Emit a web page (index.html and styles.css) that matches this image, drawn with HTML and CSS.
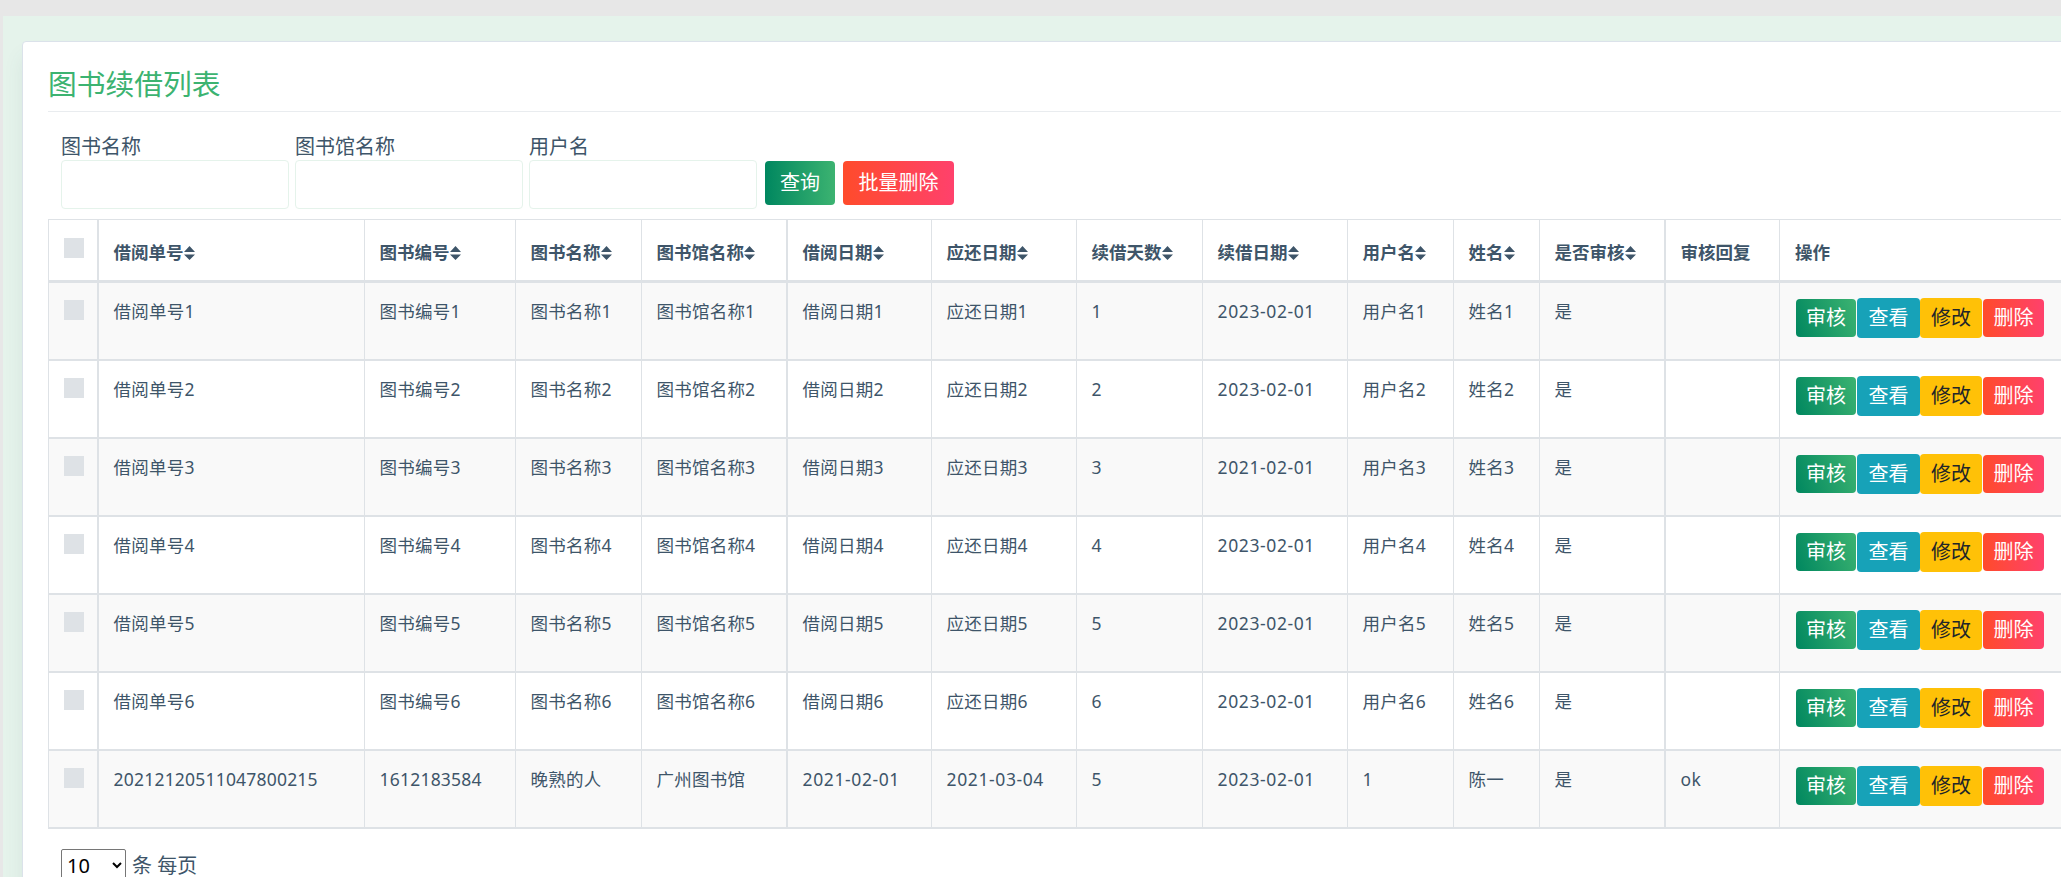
FILE: index.html
```html
<!DOCTYPE html>
<html lang="zh-CN">
<head>
    <meta charset="UTF-8">
    <meta name="viewport" content="width=device-width, initial-scale=1.0">
    <title>图书续借列表</title>
    <link rel="stylesheet" href="styles.css">
</head>
<body>
    <div class="content">
        <div class="widget-area">
            <h3 class="widget-title">图书续借列表</h3>
            <div class="search">
                <div class="field">
                    <label for="tushumingcheng">图书名称</label>
                    <input type="text" id="tushumingcheng" class="form-control">
                </div>
                <div class="field">
                    <label for="tushuguan">图书馆名称</label>
                    <input type="text" id="tushuguan" class="form-control">
                </div>
                <div class="field">
                    <label for="yonghuming">用户名</label>
                    <input type="text" id="yonghuming" class="form-control">
                </div>
                <div class="search-btns">
                    <button type="button" class="btn btn-success">查询</button>
                    <button type="button" class="btn btn-danger">批量删除</button>
                </div>
            </div>
            <table class="table">
                <colgroup>
                    <col class="w-check"><col class="w-order"><col class="w-code"><col class="w-name">
                    <col class="w-library"><col class="w-start"><col class="w-due"><col class="w-days">
                    <col class="w-renew"><col class="w-user"><col class="w-real"><col class="w-audit">
                    <col class="w-reply"><col class="w-action">
                </colgroup>
                <thead>
                    <tr id="thead"></tr>
                </thead>
                <tbody id="tbody"></tbody>
            </table>
            <div class="pager">
                <select class="page-size">
                    <option>10</option>
                    <option>25</option>
                    <option>50</option>
                </select>
                <span>条 每页</span>
            </div>
        </div>
    </div>

    <script>
        const sortIcon = '<svg class="sort" viewBox="0 0 11 14"><path d="M5.5 0L11 6H0zM0 8.5h11L5.5 14z"/></svg>';
        const columns = ['借阅单号', '图书编号', '图书名称', '图书馆名称', '借阅日期', '应还日期', '续借天数', '续借日期', '用户名', '姓名', '是否审核'];
        const rows = [];

        for (let i = 1; i <= 6; i++) {
            const date = i === 3 ? '2021-02-01' : '2023-02-01';
            rows.push(['借阅单号' + i, '图书编号' + i, '图书名称' + i, '图书馆名称' + i, '借阅日期' + i, '应还日期' + i, i, date, '用户名' + i, '姓名' + i, '是', '']);
        }
        rows.push(['20212120511047800215', '1612183584', '晚熟的人', '广州图书馆', '2021-02-01', '2021-03-04', '5', '2023-02-01', '1', '陈一', '是', 'ok']);

        function cell(value) {
            const isDate = /^\d{4}-/.test(value);
            return isDate ? `<td class="date">${value}</td>` : `<td>${value}</td>`;
        }

        // 表头
        document.getElementById('thead').innerHTML =
            '<th><span class="check"></span></th>' +
            columns.map(name => `<th>${name}${sortIcon}</th>`).join('') +
            '<th>审核回复</th><th>操作</th>';

        // 数据行
        document.getElementById('tbody').innerHTML = rows.map(row => `
            <tr>
                <td><span class="check"></span></td>
                ${row.map(cell).join('')}
                <td>
                    <div class="actions">
                        <button class="btn-sm btn-success">审核</button>
                        <button class="btn-sm btn-info">查看</button>
                        <button class="btn-sm btn-warning">修改</button>
                        <button class="btn-sm btn-danger">删除</button>
                    </div>
                </td>
            </tr>`).join('');
    </script>
</body>
</html>
```
FILE: styles.css
```css
* {
    box-sizing: border-box;
}
body {
    margin: 0;
    padding: 16px 0 0 3px;
    height: 877px;
    overflow: hidden;
    background-color: #e7e7e7;
    color: #3e5569;
    font-family: "Noto Sans", "Noto Sans CJK SC", sans-serif;
    font-size: 20px;
    font-weight: 400;
}
.content {
    width: 2110px;
    height: 900px;
    padding: 25px 19px;
    background-color: #e5f3eb;
}
.widget-area {
    height: 1000px;
    padding: 24px 25px;
    background-color: #fff;
    border: 1px solid #dbe2ea;
    border-radius: 4px;
    box-shadow: 0 15px 20px rgba(62, 85, 105, 0.08);
}
.widget-title {
    height: 46px;
    margin: 0 0 20px;
    line-height: 36px;
    font-size: 28.75px;
    font-weight: 400;
    color: #3cb371;
    border-bottom: 1px solid #e9ecef;
}
.search {
    display: flex;
    align-items: flex-end;
    gap: 6px;
    height: 77px;
    padding-left: 13px;
}
.field {
    display: flex;
    flex-direction: column;
    width: 228px;
}
.field label {
    height: 28px;
    line-height: 30px;
}
.form-control {
    width: 100%;
    height: 49px;
    padding: 8px 15px;
    font: inherit;
    background: #fff;
    border: 1px solid #e5f3eb;
    border-radius: 4px;
}
.search-btns {
    display: flex;
    gap: 8px;
    height: 48px;
    padding-left: 2px;
}
.btn,
.btn-sm {
    padding: 0;
    border: none;
    border-radius: 4px;
    color: #fff;
    font: inherit;
    line-height: 30px;
    white-space: nowrap;
    cursor: pointer;
}
.btn {
    width: 70px;
    height: 44px;
}
.btn.btn-danger {
    width: 111px;
}
.btn-success {
    background: linear-gradient(to right, #00875f, #3cb371);
}
.btn-danger {
    background: linear-gradient(to right, #ff4b2b, #ff416c);
}
.btn-info {
    background: #17a2b8;
}
.btn-warning {
    background: #ffc107;
    color: #212529;
}

/* 表格 */
.table {
    width: 2021px;
    margin-top: 10px;
    table-layout: fixed;
    border-spacing: 0;
    border-top: 1px solid #dee2e6;
    border-left: 1px solid #dee2e6;
    font-size: 17.5px;
}
.table th,
.table td {
    padding: 15px 14px 15px 14.6px;
    text-align: left;
    vertical-align: top;
    line-height: 26px;
    white-space: nowrap;
    border-right: 1px solid #dee2e6;
    border-bottom: 2px solid #dee2e6;
}
.table th {
    height: 63px;
    padding-top: 19px;
    padding-bottom: 10px;
    font-weight: 700;
    border-bottom-width: 3px;
}
.table td {
    height: 78px;
    letter-spacing: 0.2px;
}
.table td.date {
    letter-spacing: 0.6px;
}
.table th:nth-child(1),
.table td:nth-child(1),
.table th:nth-child(5),
.table td:nth-child(5),
.table th:nth-child(12),
.table td:nth-child(12) {
    border-right-width: 2px;
}
.table th:nth-child(1),
.table td:nth-child(1),
.table th:last-child,
.table td:last-child {
    padding-left: 15px;
}
.table tbody tr:nth-child(odd) {
    background-color: #f9f9f9;
}
.w-check { width: 50px; }
.w-order { width: 266px; }
.w-code { width: 151px; }
.w-name { width: 126px; }
.w-library { width: 146px; }
.w-start { width: 144px; }
.w-due { width: 145px; }
.w-days { width: 126px; }
.w-renew { width: 145px; }
.w-user { width: 106px; }
.w-real { width: 86px; }
.w-audit { width: 126px; }
.w-reply { width: 114px; }
.w-action { width: 289px; }
.check {
    display: block;
    width: 20px;
    height: 20px;
    margin-top: 2px;
    background-color: #dee2e6;
}
.table th .check {
    margin-top: -1px;
}
.sort {
    width: 11px;
    height: 14px;
    vertical-align: -1px;
    fill: #3e5569;
}
.actions {
    display: flex;
    align-items: center;
    height: 40px;
    padding-left: 1px;
    letter-spacing: 0;
}
.btn-sm {
    width: 61px;
    height: 38px;
    font-size: 20px;
}
.btn-sm.btn-success {
    width: 60px;
    margin-right: 1px;
    background: linear-gradient(70deg, #00875f, #3cb371);
}
.btn-sm.btn-info {
    width: 63px;
    height: 40px;
}
.btn-sm.btn-warning {
    width: 62px;
    height: 40px;
    margin-right: 1px;
}

.pager {
    display: flex;
    align-items: center;
    gap: 6px;
    margin-top: 20px;
    padding-left: 13px;
    line-height: 30px;
}
.page-size {
    width: 65px;
    height: 33px;
    padding: 0 2px 1px 1px;
    font: inherit;
    color: #000;
    background-color: #fff;
    border: 1px solid #767676;
    border-radius: 2px;
}
```
